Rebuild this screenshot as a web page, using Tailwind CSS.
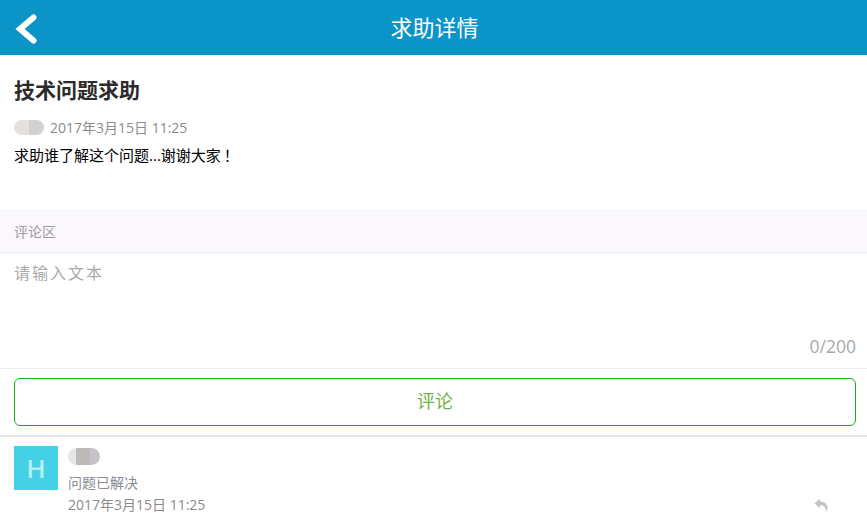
<!DOCTYPE html>
<html lang="zh">
  <head>
    <meta charset="UTF-8" />
    <title>求助详情</title>
    <script src="https://cdn.jsdelivr.net/npm/@tailwindcss/browser@4"></script>
  </head>
  <body class="bg-white h-[520px] overflow-hidden font-['Open_Sans','Noto_Sans_CJK_SC',sans-serif]">
    <header class="h-[55px] bg-[#0a94c8] flex items-center justify-center relative">
      <svg class="absolute left-[15px] top-[14px]" width="22" height="30" viewBox="0 0 22 30" fill="none">
        <path d="M18.5 3.5 L5 15 L18.5 26.5" stroke="#fff" stroke-width="6" stroke-linecap="round" stroke-linejoin="miter" />
      </svg>
      <h1 class="text-[22px] leading-none text-white pb-[2px] pl-[2px]">求助详情</h1>
    </header>

    <section class="h-[154px] px-[14px] pt-[21px]">
      <h2 class="text-[21px] leading-[28px] font-bold text-[#2b2b2b]">技术问题求助</h2>
      <div class="mt-[13px] flex items-center h-[20px]">
        <div class="w-[30px] h-[15px] rounded-full overflow-hidden flex blur-[0.6px]">
          <div class="w-[15px] bg-[#e4e1df]"></div>
          <div class="w-[15px] bg-[#d2d2d4]"></div>
        </div>
        <span class="ml-[6px] text-[14px] text-[#8f8a88]">2017年3月15日 11:25</span>
      </div>
      <p class="mt-[8px] text-[15px] leading-[20px] text-black">求助谁了解这个问题...谢谢大家<span class="ml-[3px]">！</span></p>
    </section>

    <div class="h-[44px] bg-[#faf8fd] border-b border-[#e9e9e9] px-[14px] pt-[2px] flex items-center">
      <span class="text-[14px] text-[#a39a9c]">评论区</span>
    </div>

    <div class="h-[116px] border-b border-[#eeeeee] px-[14px] pt-[8px] flex flex-col">
      <div class="text-[16px] leading-[24px] tracking-[2px] text-[#aaaaaa]">请输入文本</div>
      <div class="mt-auto mb-[10px] -mr-[3px] text-right text-[17.5px] leading-[24px] text-[#a8a8a8]">0/200</div>
    </div>

    <div class="h-[68px] border-b-2 border-[#e6e6e6] px-[14px] pt-[9px] pr-[11px]">
      <button class="w-full h-[48px] pb-[2px] rounded-[6px] border border-[#1aad19] text-[18px] text-[#6fb544]">评论</button>
    </div>

    <div class="flex px-[14px] pt-[9px] relative">
      <div class="w-[44px] h-[44px] bg-[#45d1e5] flex items-center justify-center text-[26px] font-semibold text-[#b5eef6]">H</div>
      <div class="ml-[10px]">
        <div class="h-[20px] flex items-center">
          <div class="w-[32px] h-[17px] rounded-full overflow-hidden flex blur-[0.6px]">
            <div class="w-[8px] bg-[#e8e6e4]"></div>
            <div class="w-[14px] bg-[#bdbab7]"></div>
            <div class="w-[10px] bg-[#c4c4c6]"></div>
          </div>
        </div>
        <p class="mt-[7px] text-[14px] leading-[20px] text-[#8a8a92]">问题已解决</p>
        <p class="mt-[2px] text-[14px] leading-[20px] text-[#8f8a88]">2017年3月15日 11:25</p>
      </div>
      <svg class="absolute left-[814px] top-[61px]" width="15" height="14" viewBox="0 0 15 14" fill="#c4c4c4">
        <path d="M6 0.5 L0.5 5.5 L6 10 L6 7.2 C9.5 7.2 11.5 8.5 12.5 14 C14.5 9 13.5 3.6 6 3.4 Z" />
      </svg>
    </div>
  </body>
</html>
